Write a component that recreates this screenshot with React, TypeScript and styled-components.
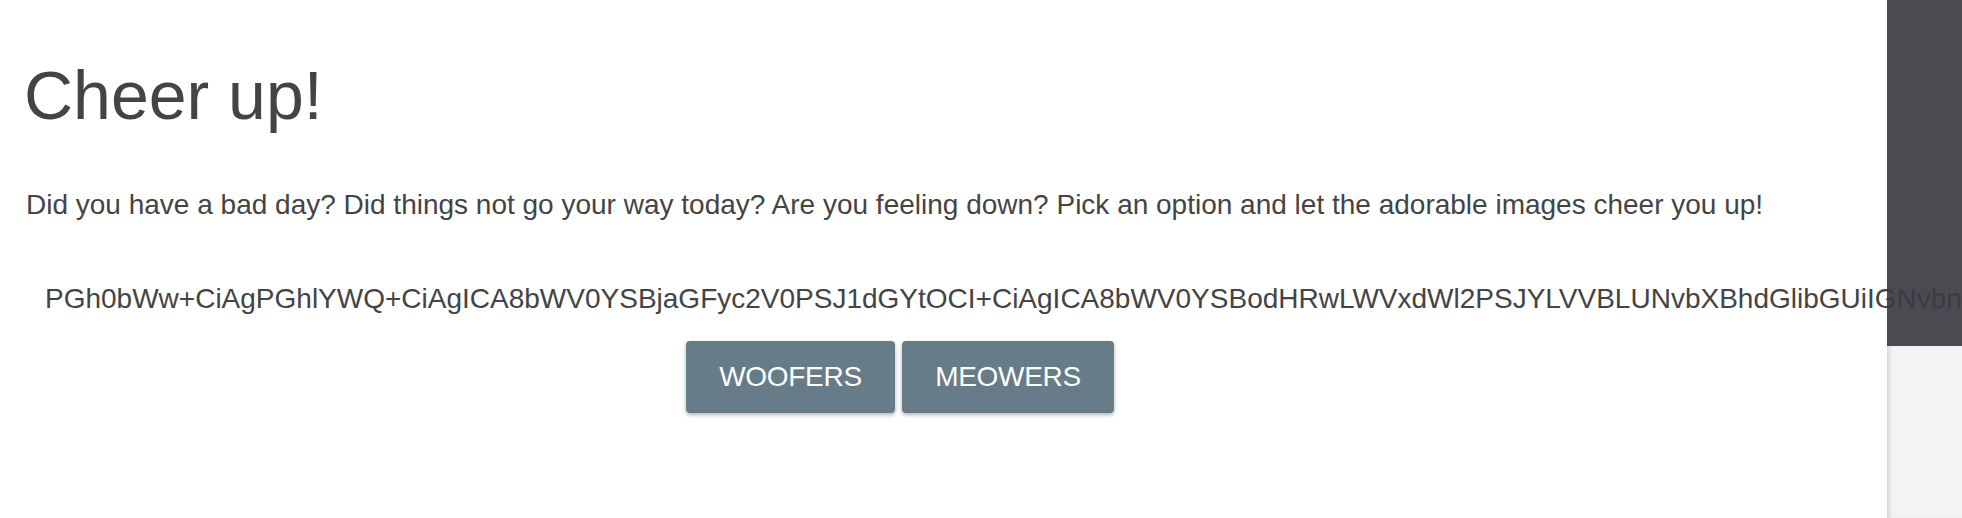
import React from "react";
import styled, { createGlobalStyle } from "styled-components";

const GlobalStyle = createGlobalStyle`
  html, body {
    margin: 0;
    padding: 0;
    background: #ffffff;
    overflow: hidden;
  }
  body {
    font-family: "Liberation Sans", Arial, Helvetica, sans-serif;
    color: #444444;
  }
`;

const Page = styled.div`
  position: relative;
  width: 1962px;
  height: 518px;
  overflow: hidden;
`;

const Content = styled.main`
  width: 1760px;
  padding: 0 20px;
  display: flex;
  flex-direction: column;
`;

const Title = styled.h1`
  margin: 56px 0 0 4px;
  font-size: 68px;
  font-weight: 400;
  line-height: 1.15;
  color: #444444;
`;

const Intro = styled.p`
  margin: 55px 0 0 6px;
  font-size: 28px;
  line-height: 1.15;
  white-space: nowrap;
  color: #444444;
`;

const Encoded = styled.div`
  margin: 62px 0 0 25px;
  font-size: 28px;
  line-height: 1.15;
  white-space: nowrap;
  color: #444444;
`;

const ButtonRow = styled.div`
  margin-top: 25px;
  display: flex;
  justify-content: center;
  gap: 7px;
`;

const ChoiceButton = styled.button<{ $width: number }>`
  width: ${(p) => p.$width}px;
  height: 72px;
  border: none;
  border-radius: 4px;
  background: #667c88;
  color: #ffffff;
  font-family: "Liberation Sans", Arial, Helvetica, sans-serif;
  font-size: 28px;
  letter-spacing: -0.3px;
  box-shadow: 0 2px 4px rgba(0, 0, 0, 0.3);
  cursor: pointer;
`;

const SidePanel = styled.aside`
  position: absolute;
  top: 0;
  right: 0;
  width: 75px;
  height: 518px;
  display: flex;
  flex-direction: column;
`;

const PanelTop = styled.div`
  height: 346px;
  background: rgba(57, 58, 63, 0.914);
`;

const PanelBottom = styled.div`
  flex: 1;
  background: #f4f4f4;
  box-shadow: inset 5px 0 5px -3px rgba(0, 0, 0, 0.15);
`;

const encoded =
  "PGh0bWw+CiAgPGhlYWQ+CiAgICA8bWV0YSBjaGFyc2V0PSJ1dGYtOCI+CiAgICA8bWV0YSBodHRwLWVxdWl2PSJYLVVBLUNvbXBhdGlibGUiIGNvbnRlbnQ9IklFPWVkZ2UiPgo=";

export default function App() {
  return (
    <Page>
      <GlobalStyle />
      <Content>
        <Title>Cheer up!</Title>
        <Intro>
          Did you have a bad day? Did things not go your way today? Are you
          feeling down? Pick an option and let the adorable images cheer you
          up!
        </Intro>
        <Encoded>{encoded}</Encoded>
        <ButtonRow>
          <ChoiceButton $width={209}>WOOFERS</ChoiceButton>
          <ChoiceButton $width={212}>MEOWERS</ChoiceButton>
        </ButtonRow>
      </Content>
      <SidePanel>
        <PanelTop />
        <PanelBottom />
      </SidePanel>
    </Page>
  );
}
